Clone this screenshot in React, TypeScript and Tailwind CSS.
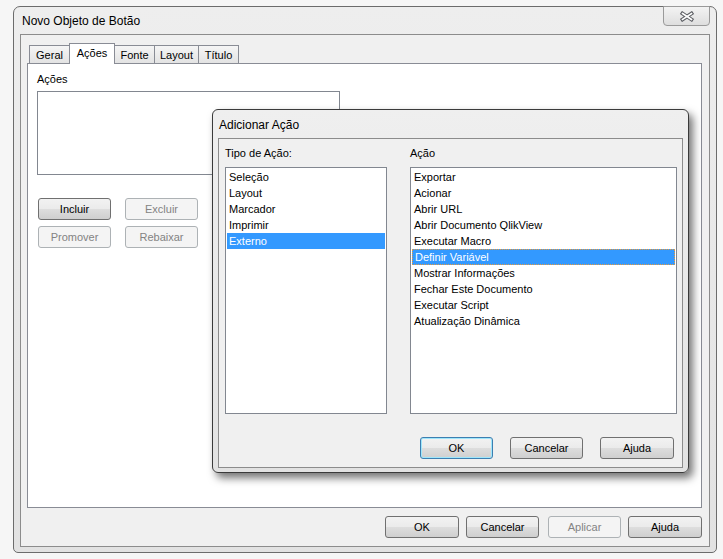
import React from 'react';

const btnBase =
  'flex items-center justify-center h-[22px] w-[73px] rounded-[3px] border text-[11px]';
const btnNormal =
  'border-[#707070] text-black bg-[linear-gradient(to_bottom,#f2f2f2_0%,#ebebeb_48%,#dddddd_52%,#cfcfcf_100%)]';
const btnDefault =
  'border-[#3c7fb1] text-black shadow-[inset_0_0_0_1px_#9fe6fb] bg-[linear-gradient(to_bottom,#f2f2f2_0%,#ebebeb_48%,#dddddd_52%,#cfcfcf_100%)]';
const btnDisabled = 'border-[#adb2b5] text-[#838383] bg-[#f4f4f4]';

type BtnKind = 'normal' | 'default' | 'disabled';

const Button: React.FC<{ label: string; kind?: BtnKind; className?: string }> = ({
  label,
  kind = 'normal',
  className = '',
}) => {
  const look = kind === 'default' ? btnDefault : kind === 'disabled' ? btnDisabled : btnNormal;
  return <div className={`${btnBase} ${look} ${className}`}>{label}</div>;
};

const CloseIcon: React.FC = () => (
  <svg width="16" height="11" viewBox="0 0 16 11">
    <path d="M3.5 2.5 L12.5 8.5 M12.5 2.5 L3.5 8.5" stroke="#5f6166" strokeWidth="3.8" strokeLinecap="square" fill="none" />
    <path d="M3.5 2.5 L12.5 8.5 M12.5 2.5 L3.5 8.5" stroke="#ffffff" strokeWidth="1.6" strokeLinecap="square" fill="none" />
  </svg>
);

const tipos = ['Seleção', 'Layout', 'Marcador', 'Imprimir', 'Externo'];
const acoes = [
  'Exportar',
  'Acionar',
  'Abrir URL',
  'Abrir Documento QlikView',
  'Executar Macro',
  'Definir Variável',
  'Mostrar Informações',
  'Fechar Este Documento',
  'Executar Script',
  'Atualização Dinâmica',
];

const ListBox: React.FC<{ items: string[]; selected: number; focus?: boolean; className: string }> = ({
  items,
  selected,
  focus,
  className,
}) => (
  <div className={`h-[247px] border border-[#828790] bg-white p-[1px] ${className}`}>
    {items.map((it, i) => (
      <div
        key={i}
        className={`h-[16px] pl-[2px] ${
          i === selected ? 'bg-[#3399ff] text-white' : 'text-black'
        } ${i === selected && focus ? 'border border-dotted border-[#e89a3c] pl-[1px] leading-[15px]' : 'leading-[17px]'}`}
      >
        {it}
      </div>
    ))}
  </div>
);

const tabs = [
  { label: 'Geral', w: 'w-[41px]' },
  { label: 'Ações', w: 'w-[46px]', active: true },
  { label: 'Fonte', w: 'w-[41px]' },
  { label: 'Layout', w: 'w-[45px]' },
  { label: 'Título', w: 'w-[41px]' },
];

export default function App() {
  return (
    <div className="relative h-[559px] w-[723px] overflow-hidden bg-[#f6f6f6] pt-[6px] pl-[13px] font-['Liberation_Sans',Arial,sans-serif] text-[11px] text-black">
      {/* janela principal */}
      <div className="flex h-[547px] w-[704px] flex-col rounded-t-[7px] rounded-b-[5px] border border-[#6c6c6c] bg-[linear-gradient(to_bottom,#eeeeee,#e2e2e2)] px-[6px] pb-[5px]">
        <div className="flex h-[27px] items-start justify-between">
          <span className="pl-[2px] pt-[7px] text-[12px] leading-[14px]">Novo Objeto de Botão</span>
          <div className="-mt-[1px] flex h-[20px] w-[47px] items-center justify-center rounded-b-[4px] border border-[#9a9a9a] bg-[linear-gradient(to_bottom,#f3f3f3,#dedede)]">
            <CloseIcon />
          </div>
        </div>

        <div className="flex flex-1 flex-col border border-[#8c8c8c] bg-[#f0f0f0] pt-[8px] pl-[6px] pr-[7px]">
          <div className="flex h-[20px] items-end pl-[2px]">
            {tabs.map((t, i) =>
              t.active ? (
                <div
                  key={i}
                  className={`relative z-10 -mb-[1px] -ml-[1px] flex h-[21px] ${t.w} justify-center border border-b-0 border-[#898c95] bg-white pt-[3px] leading-[13px]`}
                >
                  {t.label}
                </div>
              ) : (
                <div
                  key={i}
                  className={`-ml-[1px] flex h-[18px] ${t.w} first:ml-0 justify-center border border-b-0 border-[#898c95] bg-[linear-gradient(to_bottom,#f5f5f5,#e3e3e3)] pt-[3px] leading-[13px]`}
                >
                  {t.label}
                </div>
              )
            )}
          </div>

          <div className="h-[445px] border border-[#898c95] bg-white pl-[9px] pt-[9px]">
            <div className="leading-[13px]">Ações</div>
            <div className="mt-[5px] h-[84px] w-[303px] border border-[#828790] bg-white" />
            <div className="mt-[23px] ml-[1px] flex flex-col gap-[6px]">
              <div className="flex gap-[14px]">
                <Button label="Incluir" className="h-[21px] border-[#3c3c3c]" />
                <Button label="Excluir" kind="disabled" className="h-[21px]" />
              </div>
              <div className="flex gap-[14px]">
                <Button label="Promover" kind="disabled" className="h-[21px]" />
                <Button label="Rebaixar" kind="disabled" className="h-[21px]" />
              </div>
            </div>
          </div>

          <div className="mt-[8px] flex justify-end pr-[0px]">
            <Button label="OK" className="w-[74px]" />
            <Button label="Cancelar" className="ml-[7px]" />
            <Button label="Aplicar" kind="disabled" className="ml-[9px]" />
            <Button label="Ajuda" className="ml-[7px] w-[74px]" />
          </div>
        </div>
      </div>

      {/* diálogo modal */}
      <div className="absolute left-[212px] top-[109px] flex h-[364px] w-[477px] flex-col rounded-[6px] border border-[#3a3a3a] bg-[linear-gradient(to_bottom,#efefef,#e2e2e2)] px-[5px] pb-[4px] shadow-[4px_5px_9px_rgba(0,0,0,0.55)]">
        <div className="flex h-[28px] items-center pl-[1px] pt-[1px] text-[12px]">Adicionar Ação</div>
        <div className="flex flex-1 flex-col border border-[#8c8c8c] bg-[#f0f0f0] pl-[6px] pr-[5px] pt-[8px]">
          <div className="flex gap-[23px]">
            <div className="flex flex-col">
              <div className="h-[13px] leading-[13px]">Tipo de Ação:</div>
              <ListBox items={tipos} selected={4} className="mt-[7px] w-[162px]" />
            </div>
            <div className="flex flex-col">
              <div className="h-[13px] leading-[13px]">Ação</div>
              <ListBox items={acoes} selected={5} focus className="mt-[7px] w-[267px]" />
            </div>
          </div>
          <div className="mt-[23px] flex justify-end gap-[17px] pr-[3px]">
            <Button label="OK" kind="default" className="w-[72px]" />
            <Button label="Cancelar" />
            <Button label="Ajuda" className="w-[74px]" />
          </div>
        </div>
      </div>
    </div>
  );
}
